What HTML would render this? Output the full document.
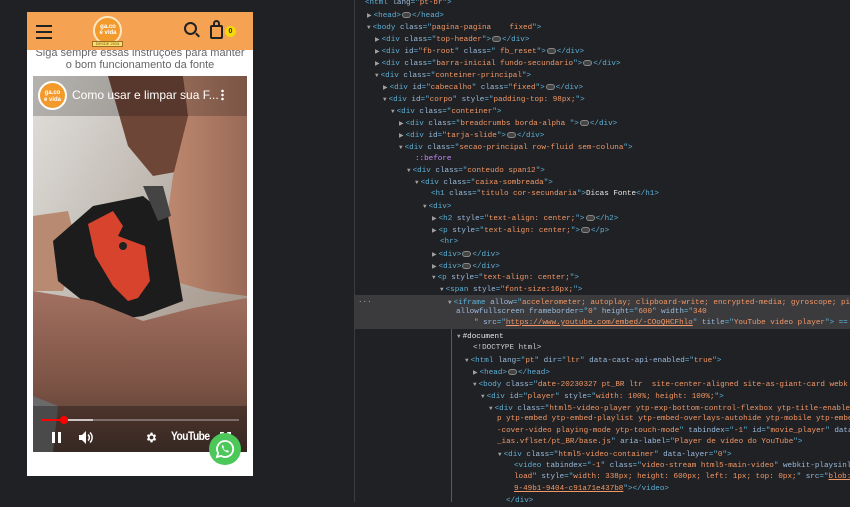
<!DOCTYPE html>
<html><head><meta charset="utf-8">
<style>
*{margin:0;padding:0;box-sizing:border-box}
body{width:850px;height:502px;background:#202124;position:relative;overflow:hidden;font-family:"Liberation Sans",sans-serif}
#phone{position:absolute;left:27px;top:12px;width:226px;height:464px;background:#fff}
#hdr{position:absolute;left:0;top:0;width:226px;height:38px;background:#f6a253;z-index:2}
.txt{position:absolute;left:0;width:226px;text-align:center;color:#666;font-size:11px;line-height:12px}
#vid{position:absolute;left:6px;top:64px;width:214px;height:376px;overflow:hidden;background:#333}
#div{position:absolute;left:354px;top:0;width:1px;height:502px;background:#3c3c3c}
#dt{position:absolute;left:355px;top:0;width:495px;height:502px;background:#202124;font-family:"Liberation Mono",monospace;font-size:7.6px;color:#e8e8e8}
.l{position:absolute;white-space:pre;line-height:11px}
.t{color:#5db0d7}.a{color:#9bbbdc}.v{color:#f29766}.p{color:#c58af9}.u{color:#f29766;text-decoration:underline}
.ar{color:#a0a0a0;font-size:6px;margin-right:2px}
.dots{display:inline-block;width:9px;height:6px;border:1px solid #888;border-radius:3px;background:#444;vertical-align:middle;margin:0 1px}
</style></head><body>
<div id="phone">
 <div id="hdr">
  <div style="position:absolute;left:9px;top:13px;width:16px;height:2px;background:#222"></div>
  <div style="position:absolute;left:9px;top:19px;width:16px;height:2px;background:#222"></div>
  <div style="position:absolute;left:9px;top:25px;width:16px;height:2px;background:#222"></div>
  <div style="position:absolute;left:66px;top:4px;width:29px;height:29px;border-radius:50%;background:#f39a2c;border:2px solid #fde6c0"></div>
  <div style="position:absolute;left:70px;top:12px;width:22px;font-size:6px;color:#fff;font-weight:bold;text-align:center">ga.co<br>e vida</div>
  <div style="position:absolute;left:65px;top:29px;width:31px;height:6px;background:#f7e06b;border:1px solid #a07020;font-size:4px;line-height:4px;text-align:center;color:#7a4a10">DESDE 2015</div>
  <div style="position:absolute;left:157px;top:10px;width:13px;height:13px;border:2px solid #222;border-radius:50%"></div>
  <div style="position:absolute;left:168px;top:22px;width:5px;height:2px;background:#222;transform:rotate(45deg)"></div>
  <div style="position:absolute;left:183px;top:13px;width:13px;height:14px;border:2px solid #222;border-radius:2px"></div>
  <div style="position:absolute;left:186px;top:8px;width:7px;height:7px;border:2px solid #222;border-bottom:none;border-radius:4px 4px 0 0"></div>
  <div style="position:absolute;left:198px;top:14px;width:11px;height:11px;border-radius:50%;background:#f5d90a;font-size:7px;font-weight:bold;text-align:center;line-height:11px;color:#333">0</div>
 </div>
 <div class="txt" style="top:35px">Siga sempre essas instruções para manter</div>
 <div class="txt" style="top:47px">o bom funcionamento da fonte</div>
 <div id="vid">
  <svg width="214" height="376" viewBox="0 0 214 376">
   <defs><linearGradient id="bg" x1="0" y1="0" x2="1" y2="1"><stop offset="0" stop-color="#e2e0dc"/><stop offset=".45" stop-color="#bdb6ae"/><stop offset="1" stop-color="#9a8678"/></linearGradient>
   <linearGradient id="hand" x1="0" y1="0" x2="0" y2="1"><stop offset="0" stop-color="#a27060"/><stop offset=".6" stop-color="#7a5244"/><stop offset="1" stop-color="#4e3a32"/></linearGradient>
   <linearGradient id="fg" x1="0" y1="0" x2="1" y2="0"><stop offset="0" stop-color="#c08a70"/><stop offset="1" stop-color="#9a6a58"/></linearGradient></defs>
   <rect width="214" height="376" fill="url(#bg)"/>
   <path d="M75 0 L150 0 L160 60 L148 95 L120 100 L95 70 Z" fill="#6e4638"/>
   <path d="M150 0 L214 0 L214 220 L175 215 L140 205 L130 170 L140 100 L155 40 Z" fill="url(#fg)"/>
   <path d="M0 140 L35 135 L45 175 L30 215 L0 215 Z" fill="#b88a72"/>
   <path d="M20 165 L60 130 L110 120 L135 140 L150 225 L110 240 L75 245 L25 205 Z" fill="#1c1c1c"/>
   <path d="M110 110 L130 110 L138 140 L125 145 Z" fill="#444"/>
   <path d="M55 148 L80 135 L90 150 L85 160 L112 170 L117 205 L105 222 L95 225 L80 210 L62 180 Z" fill="#d8432e"/>
   <circle cx="90" cy="170" r="4" fill="#222"/>
   <path d="M0 215 L60 225 L110 245 L160 232 L214 222 L214 376 L0 376 Z" fill="url(#hand)"/>
   <path d="M0 320 L25 330 L20 376 L0 376 Z" fill="#6a6a6a"/>
   <rect x="0" y="0" width="214" height="40" fill="#000" opacity=".2"/>
   <rect x="0" y="330" width="214" height="46" fill="#000" opacity=".3"/>
  </svg>
  <div style="position:absolute;left:5px;top:5px;width:29px;height:29px;border-radius:50%;background:#f39a2c;border:2px solid #fff;font-size:6px;color:#fff;font-weight:bold;text-align:center;padding-top:7px;line-height:7px">ga.co<br>e vida</div>
  <div style="position:absolute;left:39px;top:12px;color:#fff;font-size:12px">Como usar e limpar sua F...</div>
  <div style="position:absolute;left:188px;top:13px;width:3px;height:12px;background:radial-gradient(circle,#fff 1.2px,transparent 1.4px) 0 0/3px 4px"></div>
  <div style="position:absolute;left:8px;top:343px;width:198px;height:2px;background:rgba(255,255,255,.3)"></div>
  <div style="position:absolute;left:8px;top:343px;width:52px;height:2px;background:rgba(255,255,255,.6)"></div>
  <div style="position:absolute;left:8px;top:343px;width:23px;height:2px;background:#f00"></div>
  <div style="position:absolute;left:27px;top:340px;width:8px;height:8px;border-radius:50%;background:#f00"></div>
  <div style="position:absolute;left:19px;top:356px;width:3px;height:11px;background:#fff"></div>
  <div style="position:absolute;left:25px;top:356px;width:3px;height:11px;background:#fff"></div>
  <svg style="position:absolute;left:46px;top:355px" width="14" height="13" viewBox="0 0 14 13"><path d="M0 4h3l4-4v13l-4-4H0z" fill="#fff"/><path d="M9 3.5a4 4 0 0 1 0 6M11 1.5a7 7 0 0 1 0 10" stroke="#fff" stroke-width="1.5" fill="none"/></svg>
  <svg style="position:absolute;left:112px;top:355px" width="13" height="13" viewBox="0 0 24 24"><path fill="#fff" d="M19.4 13a7.5 7.5 0 0 0 0-2l2.1-1.6-2-3.5-2.5 1a7 7 0 0 0-1.7-1L15 3h-4l-.4 2.9a7 7 0 0 0-1.7 1l-2.5-1-2 3.5L6.6 11a7.5 7.5 0 0 0 0 2l-2.1 1.6 2 3.5 2.5-1a7 7 0 0 0 1.7 1L11 21h4l.4-2.9a7 7 0 0 0 1.7-1l2.5 1 2-3.5zM13 15.5a3.5 3.5 0 1 1 0-7 3.5 3.5 0 0 1 0 7z" transform="translate(-1 0)"/></svg>
  <div style="position:absolute;left:138px;top:353px;color:#fff;font-size:12px;font-weight:bold;letter-spacing:-.6px;transform:scaleX(.85);transform-origin:left">YouTube</div>
  <div style="position:absolute;left:187px;top:356px;width:11px;height:10px;border:2px solid #fff;clip-path:polygon(0 0,35% 0,35% 100%,65% 100%,65% 0,100% 0,100% 100%,0 100%)"></div>
 </div>
 <div style="position:absolute;left:182px;top:421px;width:32px;height:32px;border-radius:50%;background:#4cc75a"></div>
 <svg style="position:absolute;left:188px;top:427px" width="20" height="20" viewBox="0 0 20 20"><path d="M10 2a8 8 0 0 0-6.9 12L2 18l4.1-1.1A8 8 0 1 0 10 2z" fill="none" stroke="#fff" stroke-width="1.8"/><path d="M7 6.5c.5-.5 1-.4 1.2 0l.7 1.5c.1.4-.4.8-.6 1.1.6 1.2 1.4 2 2.6 2.6.3-.2.7-.7 1.1-.6l1.5.7c.4.2.5.7 0 1.2-1.8 1.8-7.5-3.5-6.5-6.5z" fill="#fff"/></svg>
</div>
<div id="div"></div>
<div id="dt">
 <div style="position:absolute;left:0;top:295px;width:495px;height:34px;background:#3b3b3e"></div>
 <div style="position:absolute;left:96px;top:329px;width:1px;height:173px;background:#5a5a5a"></div>
 <div class="l" style="left:3px;top:296px;color:#aaa">...</div>
 <div class="l" style="left:10px;top:-2px"><span class="t">&lt;html </span><span class="a">lang</span><span class="t">="</span><span class="v">pt-br</span><span class="t">"&gt;</span></div>
 <div class="l" style="left:12px;top:10px"><span class="ar">▶</span><span class="t">&lt;head&gt;</span><span class="dots"></span><span class="t">&lt;/head&gt;</span></div>
 <div class="l" style="left:12px;top:22px"><span class="ar">▼</span><span class="t">&lt;body </span><span class="a">class</span><span class="t">="</span><span class="v">pagina-pagina    fixed</span><span class="t">"&gt;</span></div>
 <div class="l" style="left:20px;top:34px"><span class="ar">▶</span><span class="t">&lt;div </span><span class="a">class</span><span class="t">="</span><span class="v">top-header</span><span class="t">"&gt;</span><span class="dots"></span><span class="t">&lt;/div&gt;</span></div>
 <div class="l" style="left:20px;top:46px"><span class="ar">▶</span><span class="t">&lt;div </span><span class="a">id</span><span class="t">="</span><span class="v">fb-root</span><span class="t">" </span><span class="a">class</span><span class="t">="</span><span class="v"> fb_reset</span><span class="t">"&gt;</span><span class="dots"></span><span class="t">&lt;/div&gt;</span></div>
 <div class="l" style="left:20px;top:58px"><span class="ar">▶</span><span class="t">&lt;div </span><span class="a">class</span><span class="t">="</span><span class="v">barra-inicial fundo-secundario</span><span class="t">"&gt;</span><span class="dots"></span><span class="t">&lt;/div&gt;</span></div>
 <div class="l" style="left:20px;top:70px"><span class="ar">▼</span><span class="t">&lt;div </span><span class="a">class</span><span class="t">="</span><span class="v">conteiner-principal</span><span class="t">"&gt;</span></div>
 <div class="l" style="left:28px;top:82px"><span class="ar">▶</span><span class="t">&lt;div </span><span class="a">id</span><span class="t">="</span><span class="v">cabecalho</span><span class="t">" </span><span class="a">class</span><span class="t">="</span><span class="v">fixed</span><span class="t">"&gt;</span><span class="dots"></span><span class="t">&lt;/div&gt;</span></div>
 <div class="l" style="left:28px;top:94px"><span class="ar">▼</span><span class="t">&lt;div </span><span class="a">id</span><span class="t">="</span><span class="v">corpo</span><span class="t">" </span><span class="a">style</span><span class="t">="</span><span class="v">padding-top: 98px;</span><span class="t">"&gt;</span></div>
 <div class="l" style="left:36px;top:106px"><span class="ar">▼</span><span class="t">&lt;div </span><span class="a">class</span><span class="t">="</span><span class="v">conteiner</span><span class="t">"&gt;</span></div>
 <div class="l" style="left:44px;top:118px"><span class="ar">▶</span><span class="t">&lt;div </span><span class="a">class</span><span class="t">="</span><span class="v">breadcrumbs borda-alpha </span><span class="t">"&gt;</span><span class="dots"></span><span class="t">&lt;/div&gt;</span></div>
 <div class="l" style="left:44px;top:130px"><span class="ar">▶</span><span class="t">&lt;div </span><span class="a">id</span><span class="t">="</span><span class="v">tarja-slide</span><span class="t">"&gt;</span><span class="dots"></span><span class="t">&lt;/div&gt;</span></div>
 <div class="l" style="left:44px;top:142px"><span class="ar">▼</span><span class="t">&lt;div </span><span class="a">class</span><span class="t">="</span><span class="v">secao-principal row-fluid sem-coluna</span><span class="t">"&gt;</span></div>
 <div class="l" style="left:60px;top:154px"><span class="p">::before</span></div>
 <div class="l" style="left:52px;top:165px"><span class="ar">▼</span><span class="t">&lt;div </span><span class="a">class</span><span class="t">="</span><span class="v">conteudo span12</span><span class="t">"&gt;</span></div>
 <div class="l" style="left:60px;top:177px"><span class="ar">▼</span><span class="t">&lt;div </span><span class="a">class</span><span class="t">="</span><span class="v">caixa-sombreada</span><span class="t">"&gt;</span></div>
 <div class="l" style="left:76px;top:189px"><span class="t">&lt;h1 </span><span class="a">class</span><span class="t">="</span><span class="v">titulo cor-secundaria</span><span class="t">"&gt;</span>Dicas Fonte<span class="t">&lt;/h1&gt;</span></div>
 <div class="l" style="left:68px;top:201px"><span class="ar">▼</span><span class="t">&lt;div&gt;</span></div>
 <div class="l" style="left:77px;top:213px"><span class="ar">▶</span><span class="t">&lt;h2 </span><span class="a">style</span><span class="t">="</span><span class="v">text-align: center;</span><span class="t">"&gt;</span><span class="dots"></span><span class="t">&lt;/h2&gt;</span></div>
 <div class="l" style="left:77px;top:225px"><span class="ar">▶</span><span class="t">&lt;p </span><span class="a">style</span><span class="t">="</span><span class="v">text-align: center;</span><span class="t">"&gt;</span><span class="dots"></span><span class="t">&lt;/p&gt;</span></div>
 <div class="l" style="left:85px;top:237px"><span class="t">&lt;hr&gt;</span></div>
 <div class="l" style="left:77px;top:249px"><span class="ar">▶</span><span class="t">&lt;div&gt;</span><span class="dots"></span><span class="t">&lt;/div&gt;</span></div>
 <div class="l" style="left:77px;top:261px"><span class="ar">▶</span><span class="t">&lt;div&gt;</span><span class="dots"></span><span class="t">&lt;/div&gt;</span></div>
 <div class="l" style="left:77px;top:272px"><span class="ar">▼</span><span class="t">&lt;p </span><span class="a">style</span><span class="t">="</span><span class="v">text-align: center;</span><span class="t">"&gt;</span></div>
 <div class="l" style="left:85px;top:284px"><span class="ar">▼</span><span class="t">&lt;span </span><span class="a">style</span><span class="t">="</span><span class="v">font-size:16px;</span><span class="t">"&gt;</span></div>
 <div class="l" style="left:93px;top:297px"><span class="ar">▼</span><span class="t">&lt;iframe </span><span class="a">allow</span><span class="t">="</span><span class="v">accelerometer; autoplay; clipboard-write; encrypted-media; gyroscope; pi</span></div>
 <div class="l" style="left:101px;top:307px"><span class="a">allowfullscreen frameborder</span><span class="t">="</span><span class="v">0</span><span class="t">" </span><span class="a">height</span><span class="t">="</span><span class="v">600</span><span class="t">" </span><span class="a">width</span><span class="t">="</span><span class="v">340</span></div>
 <div class="l" style="left:119px;top:318px"><span class="v">" </span><span class="a">src</span><span class="t">="</span><span class="u">https://www.youtube.com/embed/-COoQHCFhlo</span><span class="t">" </span><span class="a">title</span><span class="t">="</span><span class="v">YouTube video player</span><span class="t">"&gt; == </span></div>
 <div class="l" style="left:102px;top:331px"><span class="ar">▼</span>#document</div>
 <div class="l" style="left:118px;top:343px;color:#ccc">&lt;!DOCTYPE html&gt;</div>
 <div class="l" style="left:110px;top:355px"><span class="ar">▼</span><span class="t">&lt;html </span><span class="a">lang</span><span class="t">="</span><span class="v">pt</span><span class="t">" </span><span class="a">dir</span><span class="t">="</span><span class="v">ltr</span><span class="t">" </span><span class="a">data-cast-api-enabled</span><span class="t">="</span><span class="v">true</span><span class="t">"&gt;</span></div>
 <div class="l" style="left:118px;top:367px"><span class="ar">▶</span><span class="t">&lt;head&gt;</span><span class="dots"></span><span class="t">&lt;/head&gt;</span></div>
 <div class="l" style="left:118px;top:379px"><span class="ar">▼</span><span class="t">&lt;body </span><span class="a">class</span><span class="t">="</span><span class="v">date-20230327 pt_BR ltr  site-center-aligned site-as-giant-card webk</span></div>
 <div class="l" style="left:126px;top:391px"><span class="ar">▼</span><span class="t">&lt;div </span><span class="a">id</span><span class="t">="</span><span class="v">player</span><span class="t">" </span><span class="a">style</span><span class="t">="</span><span class="v">width: 100%; height: 100%;</span><span class="t">"&gt;</span></div>
 <div class="l" style="left:134px;top:403px"><span class="ar">▼</span><span class="t">&lt;div </span><span class="a">class</span><span class="t">="</span><span class="v">html5-video-player ytp-exp-bottom-control-flexbox ytp-title-enable</span></div>
 <div class="l" style="left:142px;top:414px"><span class="v">p ytp-embed ytp-embed-playlist ytp-embed-overlays-autohide ytp-mobile ytp-embe</span></div>
 <div class="l" style="left:142px;top:426px"><span class="v">-cover-video playing-mode ytp-touch-mode</span><span class="t">" </span><span class="a">tabindex</span><span class="t">="</span><span class="v">-1</span><span class="t">" </span><span class="a">id</span><span class="t">="</span><span class="v">movie_player</span><span class="t">" </span><span class="a">data</span></div>
 <div class="l" style="left:142px;top:437px"><span class="v">_ias.vflset/pt_BR/base.js</span><span class="t">" </span><span class="a">aria-label</span><span class="t">="</span><span class="v">Player de vídeo do YouTube</span><span class="t">"&gt;</span></div>
 <div class="l" style="left:143px;top:449px"><span class="ar">▼</span><span class="t">&lt;div </span><span class="a">class</span><span class="t">="</span><span class="v">html5-video-container</span><span class="t">" </span><span class="a">data-layer</span><span class="t">="</span><span class="v">0</span><span class="t">"&gt;</span></div>
 <div class="l" style="left:159px;top:461px"><span class="t">&lt;video </span><span class="a">tabindex</span><span class="t">="</span><span class="v">-1</span><span class="t">" </span><span class="a">class</span><span class="t">="</span><span class="v">video-stream html5-main-video</span><span class="t">" </span><span class="a">webkit-playsinl</span></div>
 <div class="l" style="left:159px;top:472px"><span class="v">load</span><span class="t">" </span><span class="a">style</span><span class="t">="</span><span class="v">width: 338px; height: 600px; left: 1px; top: 0px;</span><span class="t">" </span><span class="a">src</span><span class="t">="</span><span class="u">blob:</span></div>
 <div class="l" style="left:159px;top:484px"><span class="u">9-49b1-9404-c91a71e437b8</span><span class="t">"&gt;&lt;/video&gt;</span></div>
 <div class="l" style="left:151px;top:496px"><span class="t">&lt;/div&gt;</span></div>
</div>
</body></html>
